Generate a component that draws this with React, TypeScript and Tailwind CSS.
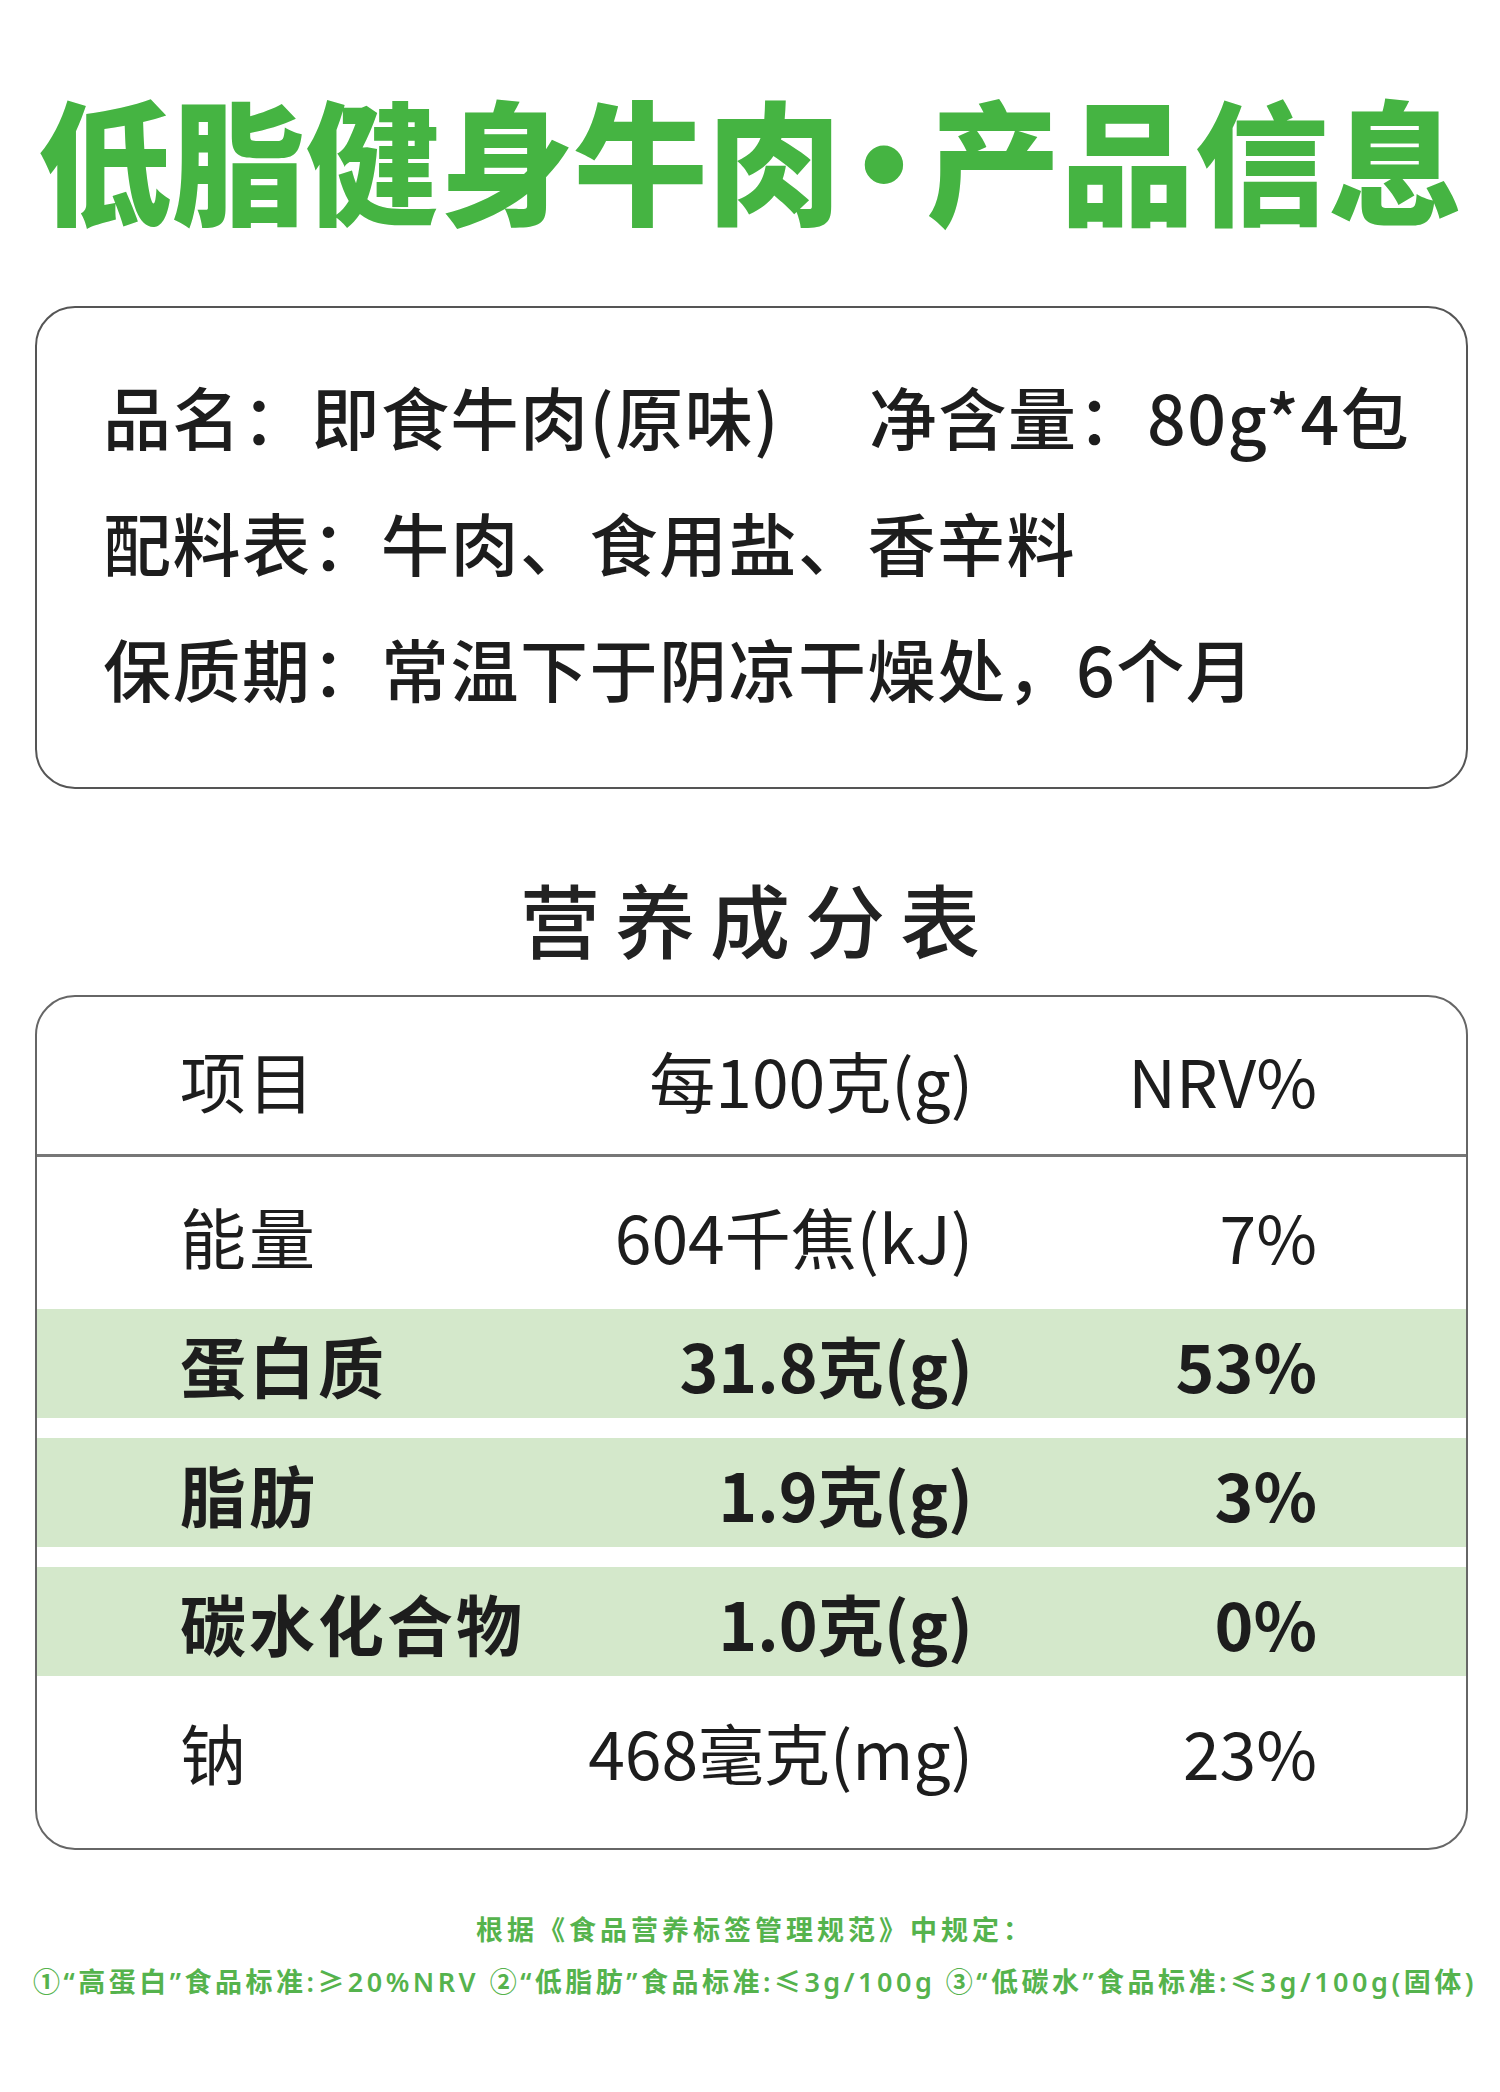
import React from "react";

type Row = {
	name: string;
	amount: string;
	nrv: string;
	highlight?: boolean;
};

const rows: Row[] = [
	{ name: "能量", amount: "604千焦(kJ)", nrv: "7%" },
	{ name: "蛋白质", amount: "31.8克(g)", nrv: "53%", highlight: true },
	{ name: "脂肪", amount: "1.9克(g)", nrv: "3%", highlight: true },
	{ name: "碳水化合物", amount: "1.0克(g)", nrv: "0%", highlight: true },
	{ name: "钠", amount: "468毫克(mg)", nrv: "23%" },
];

const font = { fontFamily: '"Noto Sans CJK SC", "Noto Sans", sans-serif' };
// latin first so quotes and digits stay narrow in the footnote
const noteFont = { fontFamily: '"Noto Sans", "Noto Sans CJK SC", sans-serif' };
const dotFont = { fontFamily: '"Liberation Sans", sans-serif' };

export default function App() {
	return (
		<div
			className="w-[1500px] h-[2092px] bg-white text-[#1d1d1d] overflow-hidden"
			style={font}
		>
			{/* title */}
			<h1 className="mt-[90px] h-[134px] text-center text-[134px] leading-none font-black text-[#45b442] whitespace-nowrap">
				低脂健身牛肉
				<span className="mx-[19px] align-[6px] leading-[0]" style={dotFont}>
					•
				</span>
				产品信息
			</h1>

			{/* product info */}
			<div className="mt-[82px] ml-[35px] w-[1433px] h-[483px] rounded-[40px] border-2 border-[#555] pl-[66px] pt-[45px] text-[68px] leading-[126px] tracking-[1.5px] font-medium">
				<div className="flex whitespace-nowrap">
					<span className="w-[766px]">品名：即食牛肉(原味)</span>
					<span>净含量：80g*4包</span>
				</div>
				<div className="whitespace-nowrap">配料表：牛肉、食用盐、香辛料</div>
				<div className="whitespace-nowrap">保质期：常温下于阴凉干燥处，6个月</div>
			</div>

			{/* nutrition heading */}
			<h2 className="mt-[88px] pl-[15px] text-center text-[80px] leading-none font-medium tracking-[15px] text-[#222]">
				营养成分表
			</h2>

			{/* nutrition table */}
			<div className="mt-[38px] ml-[35px] w-[1433px] h-[855px] rounded-[40px] border-2 border-[#666] overflow-hidden text-[66px] leading-none">
				<div className="flex h-[160px] items-center border-b-[3px] border-[#777] pl-[143px] pr-[149px] pt-[6px]">
					<span className="flex-1 tracking-[2px]">项目</span>
					<span className="text-right">每100克(g)</span>
					<span className="w-[344px] text-right">NRV%</span>
				</div>
				<div className="flex flex-col gap-[20px] pt-[23px]">
					{rows.map((r) => (
						<div
							key={r.name}
							className={`flex h-[109px] items-center pl-[143px] pr-[149px] ${r.highlight ? "bg-[#d4e8cb] font-bold" : ""}`}
						>
							<span className="flex-1 tracking-[3px]">{r.name}</span>
							<span className="text-right">{r.amount}</span>
							<span className="w-[344px] text-right">{r.nrv}</span>
						</div>
					))}
				</div>
			</div>

			{/* footnote */}
			<div
				className="mt-[60px] pl-[10px] text-[27px] leading-[40px] font-semibold text-[#55b34d] text-center whitespace-nowrap"
				style={noteFont}
			>
				<p className="tracking-[4px]">根据《食品营养标签管理规范》中规定：</p>
				<p className="mt-[12px] tracking-[3.5px]">
					①“高蛋白”食品标准:≥20%NRV ②“低脂肪”食品标准:≤3g/100g ③“低碳水”食品标准:≤3g/100g(固体)
				</p>
			</div>
		</div>
	);
}
